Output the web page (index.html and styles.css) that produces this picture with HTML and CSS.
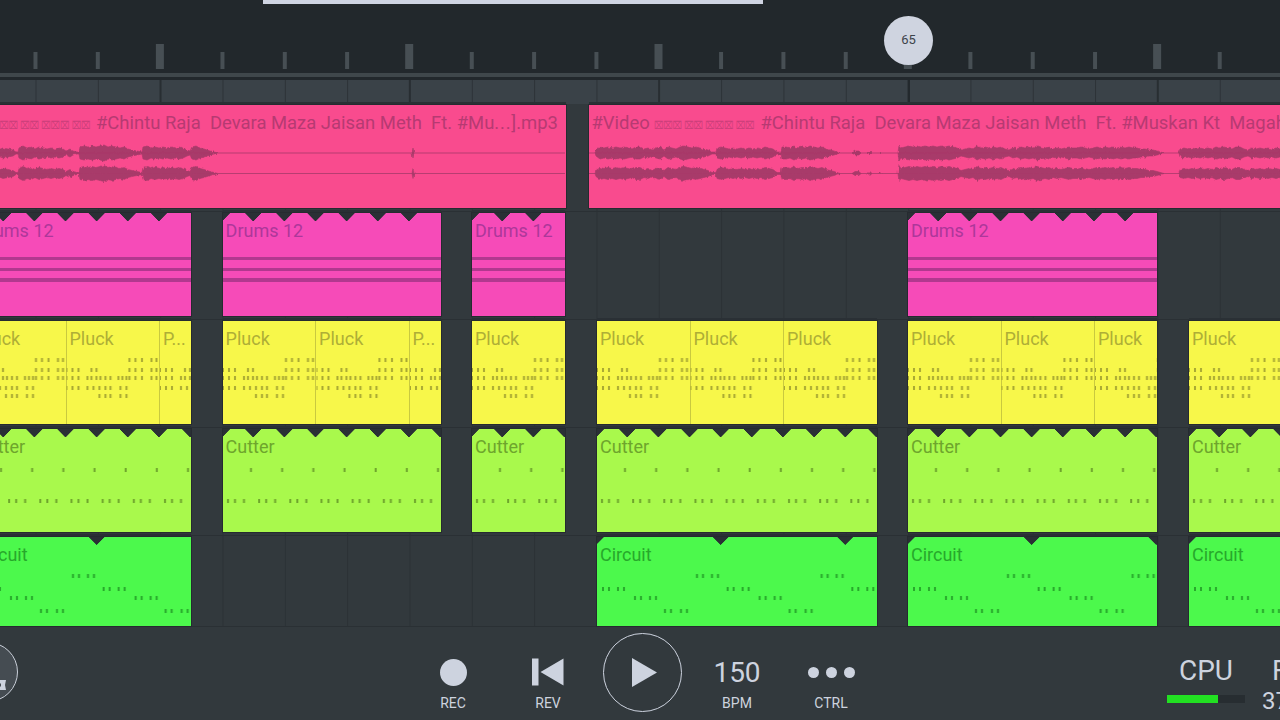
FILE: index.html
```html
<!DOCTYPE html>
<html>
<head>
  <title>FL Studio Mobile</title>
  <link rel="stylesheet" href="styles.css">
</head>
<body>
  <svg class="defs">
    <defs>
      <filter id="jag" x="-2%" y="-50%" width="104%" height="200%">
        <feTurbulence type="fractalNoise" baseFrequency="0.45 0.15" numOctaves="2" seed="4" />
        <feDisplacementMap in="SourceGraphic" scale="3" xChannelSelector="G" yChannelSelector="R" />
      </filter>
      <pattern id="pluckNotes" width="93.5" height="103" patternUnits="userSpaceOnUse">
        <path d="M63 37v4M69 37v4M75.500 37v4M85 37v4M90 37v4
                 M0 47v4M6 47v4M12 47v4M25 47v4M30 47v4M63 47v4M69 47v4M75.500 47v4M85 47v4M90 47v4
                 M0 55v4M6 55v4M12 55v4M21 55v4M25 55v4M30 55v4M34 55v4M39 55v4M44 55v4M52 55v4M56 55v4M60 55v4M63 55v4M69 55v4M75.500 55v4M85 55v4M90 55v4
                 M0 65v4M6 65v4M12 65v4M21 65v4M27 65v4M33 65v4M39 65v4M44 65v4M54 65v4M60 65v4
                 M33 73v4M39 73v4M44 73v4M54 73v4M60 73v4" />
      </pattern>
      <pattern id="cutterNotes" width="31.17" height="103" patternUnits="userSpaceOnUse">
        <path d="M28 39v4M5 70v4M12 70v4M21 70v4" />
      </pattern>
      <pattern id="circuitNotes" width="124.67" height="89" patternUnits="userSpaceOnUse">
        <path d="M100 37v4M106 37v4M115 37v4M121 37v4M6 50v4M12 50v4M21 50v4M27 50v4M38 59v4M44 59v4M53 59v4M59 59v4M68 72v4M74 72v4M84 72v4M90 72v4" />
      </pattern>
      <path id="waveA" d="M-2 0L-2 -3L3 -5L8 -4L13 -3L16 -1L18 -1L19 -5L23 -7L27 -5L31 -6L35 -4L39 -6L43 -5L47 -4L51 -5L55 -4L59 -5L63 -4L66 -2L70 -4L73 -2L77 -1L79 -1L80 -6L84 -7L88 -6L92 -7L96 -6L100 -7L104 -8L108 -6L112 -7L116 -6L120 -5L124 -6L128 -4L132 -3L137 -2L142 -1L143 -6L147 -7L151 -5L155 -6L159 -5L163 -6L167 -5L171 -6L175 -5L179 -6L183 -5L187 -3L190 -2L192 -6L196 -7L200 -5L204 -4L210 -2L218 0Z M412 0L413 -5L414 0Z" />
      <path id="waveB" d="M595 0L596 -3L600 -6L604 -5L608 -6L612 -5L616 -6L620 -5L624 -6L628 -5L632 -4L636 -6L640 -6L644 -4L648 -5L652 -3L656 -5L660 -6L664 -3L668 -6L672 -5L676 -4L680 -6L684 -7L688 -6L692 -5L696 -6L700 -5L704 -4L708 -3L712 -1L716 -1L717 -5L721 -6L725 -5L729 -4L733 -5L737 -4L741 -5L745 -4L749 -5L753 -4L757 -5L761 -4L765 -6L769 -5L773 -4L777 -1L781 -1L782 -6L786 -6L790 -5L794 -7L798 -5L802 -6L806 -5L810 -7L814 -6L818 -5L822 -6L826 -4L830 -3L834 -2L840 0Z
        M852 0L855 -2L859 -2L861 0Z M868 0L870 -2L872 0Z M879 0L880 -1L881 0Z
        M898 0L899 -8L901 -5L905 -6L909 -7L913 -6L917 -7L921 -6L925 -7L929 -6L933 -7L937 -6L941 -7L945 -6L949 -7L953 -6L957 -5L961 -3L965 -4L969 -5L973 -4L977 -7L981 -5L985 -6L989 -5L993 -6L997 -5L1001 -6L1005 -4L1009 -3L1013 -5L1017 -4L1021 -6L1025 -5L1029 -6L1033 -5L1037 -7L1041 -6L1045 -5L1049 -6L1053 -4L1057 -5L1061 -4L1065 -5L1069 -6L1073 -5L1077 -5L1081 -6L1085 -5L1089 -4L1093 -5L1097 -6L1101 -5L1105 -6L1109 -5L1113 -6L1117 -5L1121 -6L1125 -5L1129 -6L1133 -5L1137 -5L1141 -4L1145 -4L1149 -3L1153 -3L1157 -2L1164 0Z
        M1179 0L1180 -4L1184 -5L1188 -4L1192 -5L1196 -4L1200 -5L1204 -4L1208 -5L1212 -4L1216 -6L1220 -5L1224 -6L1228 -5L1232 -4L1236 -6L1240 -6L1244 -4L1248 -3L1252 -5L1256 -4L1260 -5L1264 -4L1268 -5L1272 -4L1276 -5L1280 -4L1280 0Z" />
    </defs>
  </svg>

  <div class="app">
    <div class="top-bar">
      <div class="progress"></div>
      <div class="playhead">65</div>
    </div>
    <div class="ruler-line"></div>
    <div class="beat-band"></div>

    <div class="tracks">
      <div class="track">
        <div class="clip clip-audio" style="left:-76px;width:641.5px">
          <div class="clip-label">#Video <span class="tofu">⌧⌧⌧ ⌧⌧ ⌧⌧⌧ ⌧⌧</span>  #Chintu Raja  Devara Maza Jaisan Meth  Ft. #Mu<span class="cut-dots">...</span>].mp3</div>
        </div>
        <div class="clip clip-audio" style="left:588.5px;width:800px">
          <div class="clip-label">#Video <span class="tofu">⌧⌧⌧ ⌧⌧ ⌧⌧⌧ ⌧⌧</span>  #Chintu Raja  Devara Maza Jaisan Meth  Ft. #Muskan Kt  Magahi</div>
        </div>
        <svg class="waves" viewBox="0 0 1280 103">
          <path class="wave-line" d="M-2 48H565M589 48H1280M-2 68.500H565M589 68.500H1280" />
          <g filter="url(#jag)">
            <use href="#waveA" transform="translate(0 48)" />
            <use href="#waveA" transform="translate(0 48) scale(1 -1)" />
            <use href="#waveA" transform="translate(0 68.500)" />
            <use href="#waveA" transform="translate(0 68.500) scale(1 -1)" />
            <use href="#waveB" transform="translate(0 48)" />
            <use href="#waveB" transform="translate(0 48) scale(1 -1)" />
            <use href="#waveB" transform="translate(0 68.500)" />
            <use href="#waveB" transform="translate(0 68.500) scale(1 -1)" />
          </g>
        </svg>
      </div>

      <div class="track">
        <div class="clip clip-drums" style="left:-27px;width:218px">
          <div class="notches"></div>
          <div class="clip-label">Drums 12</div>
          <div class="drum-lines"></div>
        </div>
        <div class="clip clip-drums" style="left:222.6px;width:218.4px">
          <div class="notches"></div>
          <div class="clip-label">Drums 12</div>
          <div class="drum-lines"></div>
        </div>
        <div class="clip clip-drums" style="left:472px;width:93px">
          <div class="notches"></div>
          <div class="clip-label">Drums 12</div>
          <div class="drum-lines"></div>
        </div>
        <div class="clip clip-drums" style="left:908px;width:249px">
          <div class="notches"></div>
          <div class="clip-label">Drums 12</div>
          <div class="drum-lines"></div>
        </div>
      </div>

      <div class="track">
        <div class="clip clip-pluck" style="left:-27px;width:218px">
          <div class="segments"><div class="segment">Pluck</div><div class="segment">Pluck</div><div class="segment">P...</div></div>
          <svg class="notes"><rect width="100%" height="100%" fill="url(#pluckNotes)" /></svg>
        </div>
        <div class="clip clip-pluck" style="left:222.6px;width:218.4px">
          <div class="segments"><div class="segment">Pluck</div><div class="segment">Pluck</div><div class="segment">P...</div></div>
          <svg class="notes"><rect width="100%" height="100%" fill="url(#pluckNotes)" /></svg>
        </div>
        <div class="clip clip-pluck" style="left:472px;width:93px">
          <div class="segments"><div class="segment">Pluck</div></div>
          <svg class="notes"><rect width="100%" height="100%" fill="url(#pluckNotes)" /></svg>
        </div>
        <div class="clip clip-pluck" style="left:597px;width:280px">
          <div class="segments"><div class="segment">Pluck</div><div class="segment">Pluck</div><div class="segment">Pluck</div></div>
          <svg class="notes"><rect width="100%" height="100%" fill="url(#pluckNotes)" /></svg>
        </div>
        <div class="clip clip-pluck" style="left:908px;width:249px">
          <div class="segments"><div class="segment">Pluck</div><div class="segment">Pluck</div><div class="segment">Pluck</div></div>
          <svg class="notes"><rect width="100%" height="100%" fill="url(#pluckNotes)" /></svg>
        </div>
        <div class="clip clip-pluck" style="left:1189px;width:200px">
          <div class="segments"><div class="segment">Pluck</div><div class="segment">Pluck</div></div>
          <svg class="notes"><rect width="100%" height="100%" fill="url(#pluckNotes)" /></svg>
        </div>
      </div>

      <div class="track">
        <div class="clip clip-cutter" style="left:-27px;width:218px">
          <div class="notches"></div>
          <div class="clip-label">Cutter</div>
          <svg class="notes"><rect width="100%" height="100%" fill="url(#cutterNotes)" /></svg>
        </div>
        <div class="clip clip-cutter" style="left:222.6px;width:218.4px">
          <div class="notches"></div>
          <div class="clip-label">Cutter</div>
          <svg class="notes"><rect width="100%" height="100%" fill="url(#cutterNotes)" /></svg>
        </div>
        <div class="clip clip-cutter" style="left:472px;width:93px">
          <div class="notches"></div>
          <div class="clip-label">Cutter</div>
          <svg class="notes"><rect width="100%" height="100%" fill="url(#cutterNotes)" /></svg>
        </div>
        <div class="clip clip-cutter" style="left:597px;width:280px">
          <div class="notches"></div>
          <div class="clip-label">Cutter</div>
          <svg class="notes"><rect width="100%" height="100%" fill="url(#cutterNotes)" /></svg>
        </div>
        <div class="clip clip-cutter" style="left:908px;width:249px">
          <div class="notches"></div>
          <div class="clip-label">Cutter</div>
          <svg class="notes"><rect width="100%" height="100%" fill="url(#cutterNotes)" /></svg>
        </div>
        <div class="clip clip-cutter" style="left:1189px;width:200px">
          <div class="notches"></div>
          <div class="clip-label">Cutter</div>
          <svg class="notes"><rect width="100%" height="100%" fill="url(#cutterNotes)" /></svg>
        </div>
      </div>

      <div class="track track-last">
        <div class="clip clip-circuit" style="left:-27px;width:218px">
          <div class="notches"></div>
          <div class="clip-label">Circuit</div>
          <svg class="notes"><rect width="100%" height="100%" fill="url(#circuitNotes)" /></svg>
        </div>
        <div class="clip clip-circuit" style="left:597px;width:280px">
          <div class="notches"></div>
          <div class="clip-label">Circuit</div>
          <svg class="notes"><rect width="100%" height="100%" fill="url(#circuitNotes)" /></svg>
        </div>
        <div class="clip clip-circuit" style="left:908px;width:249px">
          <div class="notches"></div>
          <div class="clip-label">Circuit</div>
          <svg class="notes"><rect width="100%" height="100%" fill="url(#circuitNotes)" /></svg>
        </div>
        <div class="clip clip-circuit" style="left:1189px;width:200px">
          <div class="notches"></div>
          <div class="clip-label">Circuit</div>
          <svg class="notes"><rect width="100%" height="100%" fill="url(#circuitNotes)" /></svg>
        </div>
      </div>
    </div>

    <div class="transport">
      <div class="menu-btn">
        <svg class="menu-icon" width="20" height="20" viewBox="0 0 20 20"><path d="M2 5L7 6.500L12 5L18 5L17 10L18 15L12 15L7 13.500L2 15L3 10Z" /><path class="menu-hole" d="M7 8.500H13V11.500H7Z" /></svg>
      </div>

      <div class="control control-rec">
        <div class="control-main"><div class="rec-dot"></div></div>
        <div class="control-label">REC</div>
      </div>
      <div class="control control-rev">
        <div class="control-main">
          <svg width="34" height="28" viewBox="0 0 34 28"><path d="M1 0.500H7.500V27.500H1ZM32.500 0.500V27.500L9.500 14Z" /></svg>
        </div>
        <div class="control-label">REV</div>
      </div>
      <div class="play-btn">
        <svg width="27" height="31" viewBox="0 0 27 31"><path d="M1 1L26 15.500L1 30Z" /></svg>
      </div>
      <div class="control control-bpm">
        <div class="control-main bpm-value">150</div>
        <div class="control-label">BPM</div>
      </div>
      <div class="control control-ctrl">
        <div class="control-main ctrl-dots"><span></span><span></span><span></span></div>
        <div class="control-label">CTRL</div>
      </div>

      <div class="meter">
        <div class="meter-title">CPU</div>
        <div class="meter-bar"><div class="meter-fill" style="width:66%"></div></div>
      </div>
      <div class="stat">
        <div class="stat-title">FPS</div>
        <div class="stat-value">37</div>
      </div>
    </div>
  </div>
</body>
</html>
```

FILE: styles.css
```css
body {
  font-family: 'Roboto', 'Liberation Sans', sans-serif;
  margin: 0;
  background-color: #32393d;
  overflow: hidden;
}

.defs {
  position: absolute;
  width: 0;
  height: 0;
}

.defs #pluckNotes path {
  stroke: #a8a832;
  stroke-width: 2;
}

.defs #cutterNotes path {
  stroke: #6ea52c;
  stroke-width: 2;
}

.defs #circuitNotes path {
  stroke: #27a82b;
  stroke-width: 2;
}

.app {
  width: 1280px;
  height: 720px;
  display: flex;
  flex-direction: column;
  overflow: hidden;
}

.top-bar {
  position: relative;
  height: 73px;
  flex: none;
  background-color: #22282c;
  background-image:
    linear-gradient(to right, #474f54 8px, transparent 8px),
    linear-gradient(to right, #474f54 4px, transparent 4px);
  background-size: 249.32px 25px, 62.33px 17px;
  background-position: 155.9px 44px, 33.5px 52px;
  background-repeat: repeat-x;
}

.progress {
  position: absolute;
  left: 263px;
  top: 0;
  width: 500px;
  height: 4px;
  background: #cfd4e2;
}

.playhead {
  position: absolute;
  left: 884px;
  top: 16px;
  width: 49px;
  height: 49px;
  border-radius: 50%;
  background: #cfd4e0;
  color: #3c434a;
  font-size: 13px;
  line-height: 48px;
  text-align: center;
}

.ruler-line {
  height: 4px;
  flex: none;
  background: #3f474b;
  border-bottom: 3px solid #22282c;
}

.beat-band {
  height: 24px;
  flex: none;
  background-color: #3a4248;
  background-image:
    linear-gradient(to right, #23292d 2px, transparent 2px),
    linear-gradient(to right, #282e32 2px, transparent 2px),
    linear-gradient(to right, #2c3237 1px, transparent 1px);
  background-size: 1280px 100%, 249.32px 100%, 62.33px 100%;
  background-position: 907.5px 0, 159.5px 0, 35.5px 0;
  background-repeat: no-repeat, repeat-x, repeat-x;
}

.tracks {
  flex: none;
  background-color: #32393d;
  background-image: linear-gradient(to right, #2b3135 1px, transparent 1px);
  background-size: 62.33px 100%;
  background-position: 35.5px 0;
}

.track {
  position: relative;
  height: 108px;
  border-bottom: 1px solid #2a3034;
  box-sizing: border-box;
}

.track-last {
  height: 91px;
}

/* clips sit on the timeline at their song position */
.clip {
  position: absolute;
  top: 1px;
  height: 103px;
  box-sizing: border-box;
  overflow: hidden;
  box-shadow: 0 0 0 1px #262b30, 0 -3px 0 #2a3035;
  font-size: 18px;
}

.track-last .clip {
  height: 89px;
}

.clip-label {
  position: relative;
  padding: 8px 0 0 3px;
  line-height: 20px;
  white-space: pre;
}

.clip-audio {
  background: #f94b8e;
  color: #b63a72;
  font-size: 18.45px;
}

.clip-drums {
  background: #f64bb8;
  color: #ad379a;
}

.clip-pluck {
  background: #f7f74a;
  color: #aeae36;
}

.clip-cutter {
  background: #a9f94c;
  color: #6ea52c;
}

.clip-circuit {
  background: #4cf94c;
  color: #27a82b;
}

/* missing-glyph boxes are narrower than the X box glyph */
.tofu {
  display: inline-block;
  width: 97px;
  font-family: 'DejaVu Sans', sans-serif;
  font-size: 11px;
  opacity: 0.7;
  transform: scaleX(0.73);
  transform-origin: 0 50%;
}

.cut-dots {
  letter-spacing: 0.8px;
}

.waves {
  position: absolute;
  left: 0;
  top: 1px;
  width: 1280px;
  height: 103px;
  overflow: hidden;
  fill: #a83a6a;
  stroke: #a83a6a;
  stroke-width: 0.6;
}

.wave-line {
  stroke-width: 1;
  opacity: 0.8;
}

.notches {
  position: absolute;
  left: 0;
  right: 0;
  top: 0;
  height: 8px;
  background-image: conic-gradient(from -45deg at 50% 8px, #2a3035 90deg, transparent 0);
  background-size: 31.17px 8px;
  background-position: 14.6px 0;
  background-repeat: repeat-x;
}

.clip-drums .notches {
  right: 16px;
}

.clip-circuit .notches {
  background-size: 124.67px 8px;
  background-position: 61.3px 0;
}

.drum-lines {
  position: absolute;
  left: 0;
  right: 0;
  top: 44px;
  height: 25px;
  background: linear-gradient(#b2388f, #b2388f) 0 0 / 100% 3px no-repeat,
    linear-gradient(#b2388f, #b2388f) 0 11px / 100% 3px no-repeat,
    linear-gradient(#b2388f, #b2388f) 0 21px / 100% 4px no-repeat;
}

.segments {
  display: flex;
  height: 100%;
}

.segment {
  flex: none;
  width: 93.5px;
  box-sizing: border-box;
  padding: 8px 0 0 3px;
  line-height: 20px;
  border-right: 1px solid #c9c93f;
  white-space: nowrap;
}

.segment:last-child {
  border-right: none;
}

.notes {
  position: absolute;
  left: 0;
  top: 0;
  width: 100%;
  height: 100%;
}

.transport {
  position: relative;
  display: flex;
  align-items: flex-start;
  height: 93px;
  padding-top: 28px;
  box-sizing: border-box;
  background: #32393d;
  color: #cdd3df;
}

.menu-btn {
  position: relative;
  flex: none;
  width: 60px;
  height: 60px;
  margin: -13px 0 0 -42px;
  border: 1.5px solid #c9cfd9;
  border-radius: 50%;
  background: #454c52;
  box-sizing: border-box;
  overflow: hidden;
}

.menu-icon {
  position: absolute;
  left: 29px;
  top: 32px;
  fill: #cdd3df;
}

.menu-hole {
  fill: #454c52;
}

.control {
  flex: none;
  width: 60px;
  text-align: center;
}

.control-main {
  height: 34px;
  display: flex;
  align-items: center;
  justify-content: center;
}

.control-main svg {
  fill: #cdd3df;
}

.control-label {
  margin-top: 6px;
  font-size: 14px;
  line-height: 16px;
}

.control-rec {
  margin-left: 405px;
}

.control-rev {
  margin-left: 35px;
}

.rec-dot {
  width: 27px;
  height: 27px;
  border-radius: 50%;
  background: #cdd3df;
}

.play-btn {
  flex: none;
  width: 79px;
  height: 79px;
  margin: -22px 0 0 25px;
  border: 1.5px solid #cdd3df;
  border-radius: 50%;
  box-sizing: border-box;
  display: flex;
  align-items: center;
  justify-content: center;
  padding-left: 4px;
  fill: #cdd3df;
}

.control-bpm {
  margin-left: 25px;
}

.bpm-value {
  font-size: 28px;
}

.control-ctrl {
  margin-left: 34px;
}

.ctrl-dots {
  gap: 7px;
}

.ctrl-dots span {
  width: 11px;
  height: 11px;
  border-radius: 50%;
  background: #cdd3df;
}

.meter {
  flex: none;
  width: 78px;
  margin-left: 306px;
  text-align: center;
}

.meter-title {
  font-size: 28px;
  line-height: 32px;
}

.meter-bar {
  height: 8px;
  margin-top: 8px;
  background: #272d31;
}

.meter-fill {
  height: 100%;
  background: #22e022;
}

.stat {
  flex: none;
  width: 60px;
  margin-left: 17px;
}

.stat-title {
  margin-left: 10px;
  font-size: 28px;
  line-height: 32px;
}

.stat-value {
  font-size: 24px;
  line-height: 28px;
}
```
